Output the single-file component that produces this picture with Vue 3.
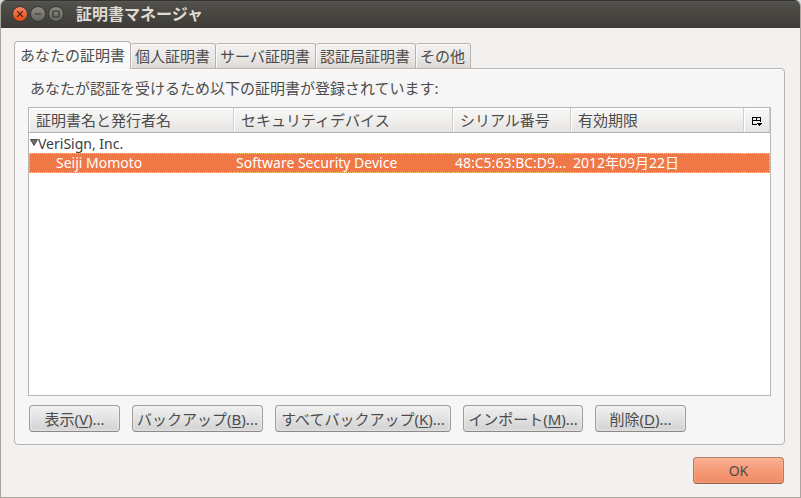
<script setup>
import { ref } from 'vue'

const tabs = ['あなたの証明書', '個人証明書', 'サーバ証明書', '認証局証明書', 'その他']
const activeTab = ref(0)

const columns = [
  { key: 'name', label: '証明書名と発行者名' },
  { key: 'device', label: 'セキュリティデバイス' },
  { key: 'serial', label: 'シリアル番号' },
  { key: 'expires', label: '有効期限' },
]

const groups = [
  {
    issuer: 'VeriSign, Inc.',
    certificates: [
      {
        name: 'Seiji Momoto',
        device: 'Software Security Device',
        serial: '48:C5:63:BC:D9...',
        expires: '2012年09月22日',
      },
    ],
  },
]
const selected = ref('Seiji Momoto')

const actions = [
  { label: '表示', accessKey: 'V' },
  { label: 'バックアップ', accessKey: 'B', size: 'm' },
  { label: 'すべてバックアップ', accessKey: 'K', size: 'l' },
  { label: 'インポート', accessKey: 'M', size: 's' },
  { label: '削除', accessKey: 'D' },
]
</script>

<template>
  <div class="window">
    <header class="titlebar">
      <button class="control close" type="button" aria-label="閉じる">
        <svg viewBox="0 0 16 16"><path d="M5.2 5.2l5.6 5.6M10.8 5.2l-5.6 5.6" /></svg>
      </button>
      <button class="control" type="button" aria-label="最小化">
        <svg viewBox="0 0 16 16"><path d="M4.500 8h7" /></svg>
      </button>
      <button class="control" type="button" aria-label="最大化">
        <svg viewBox="0 0 16 16"><path d="M5 5h6v6h-6z" /></svg>
      </button>
      <h1>証明書マネージャ</h1>
    </header>

    <main class="body">
      <div class="tabs" role="tablist">
        <button
          v-for="(tab, i) in tabs"
          :key="tab"
          type="button"
          role="tab"
          class="tab"
          :class="{ active: i === activeTab }"
          :aria-selected="i === activeTab"
          @click="activeTab = i"
        >{{ tab }}</button>
      </div>

      <section class="panel" role="tabpanel">
        <p class="intro">あなたが認証を受けるため以下の証明書が登録されています:</p>

        <div class="tree">
          <table>
            <colgroup>
              <col v-for="c in columns" :key="c.key" :class="'col-' + c.key">
              <col class="col-picker">
            </colgroup>
            <thead>
              <tr>
                <th v-for="c in columns" :key="c.key" scope="col">{{ c.label }}</th>
                <th class="picker-cell">
                  <button class="picker" type="button" aria-label="列の選択">
                    <svg viewBox="0 0 10 9" shape-rendering="crispEdges">
                      <path d="M0 0h9v1h-9zM0 1h1v7h-1zM4 1h1v3h-1zM8 1h1v4h-1zM1 3h7v1h-7zM1 7h4v1h-4z" />
                      <path d="M5 6h5v1h-1v1h-1v1h-1v-1h-1v-1h-1z" />
                    </svg>
                  </button>
                </th>
              </tr>
            </thead>
            <tbody v-for="g in groups" :key="g.issuer">
              <tr class="group">
                <td class="issuer" colspan="5">
                  <svg class="twisty" viewBox="0 0 8 7"><path d="M.5 .5h7l-3.500 6z" /></svg>{{ g.issuer }}
                </td>
              </tr>
              <tr
                v-for="c in g.certificates"
                :key="c.name"
                :class="{ selected: c.name === selected }"
                @click="selected = c.name"
              >
                <td class="child">{{ c.name }}</td>
                <td>{{ c.device }}</td>
                <td>{{ c.serial }}</td>
                <td>{{ c.expires }}</td>
                <td></td>
              </tr>
            </tbody>
          </table>
        </div>

        <div class="actions">
          <button v-for="a in actions" :key="a.label" class="button" :class="a.size" type="button">
            {{ a.label }}(<u>{{ a.accessKey }}</u>)...
          </button>
        </div>
      </section>

      <footer class="footer">
        <button class="button primary" type="button">OK</button>
      </footer>
    </main>
  </div>
</template>

<style>
body {
  background: #d9dde2;
}
</style>

<style scoped>
* {
  box-sizing: border-box;
}

.window {
  display: flex;
  flex-direction: column;
  min-height: 100vh;
  border: 1px solid #aaa49e;
  border-top: 0;
  border-radius: 6px 6px 0 0;
  background: #f2f1f0;
  color: #4c4c4c;
  font: 15px/20px "Noto Sans", "Noto Sans CJK JP", sans-serif;
  overflow: hidden;
}

button {
  margin: 0;
  padding: 0;
  font: inherit;
  color: inherit;
}

.titlebar {
  display: flex;
  align-items: center;
  gap: 2px;
  height: 28px;
  margin: 0 -1px;
  padding: 0 12px 2px;
  border-top: 1px solid #33322e;
  background: linear-gradient(#5b5a53, #504f49 2px, #3c3b37);
}

.titlebar h1 {
  margin: 0 0 0 10px;
  color: #dfdbd2;
  font-size: 16px;
  line-height: 20px;
  font-weight: 700;
}

.control {
  width: 16px;
  height: 16px;
  border: 1px solid #383733;
  border-radius: 50%;
  background: linear-gradient(#8d8c85, #64635d);
}

.control svg {
  display: block;
  width: 16px;
  height: 16px;
  margin: -1px;
  fill: none;
  stroke: #35342f;
  stroke-width: 1.2;
}

.control.close {
  background: linear-gradient(#f58560, #df4a16);
}

.control.close svg {
  stroke: #4a1d0d;
}

.body {
  display: flex;
  flex: 1;
  flex-direction: column;
  padding: 13px 15px 13px 13px;
}

.tabs {
  display: flex;
  align-items: flex-end;
  position: relative;
  margin-bottom: -1px;
}

.tab {
  height: 26px;
  padding: 0 5px 0 4px;
  border: 1px solid #b8b3ae;
  border-left: 0;
  border-radius: 3px 3px 0 0;
  background: linear-gradient(#f3f2f1, #ebe9e7 50%, #dcd9d6);
  box-shadow: inset 1px 1px 0 #f9f9f8;
  white-space: nowrap;
}

.tab.active {
  height: 28px;
  padding: 0 5px 2px;
  border-left: 1px solid #b8b3ae;
  border-bottom: 0;
  border-radius: 4px 4px 0 0;
  background: linear-gradient(#fdfdfd, #f6f6f6);
}

.panel {
  display: flex;
  flex: 1;
  flex-direction: column;
  padding: 9px 13px 12px;
  border: 1px solid #b8b3ae;
  border-radius: 0 4px 4px 4px;
  background: #f6f6f6;
  box-shadow: inset 0 1px 0 #fff;
}

.intro {
  margin: 0 0 9px 2px;
}

.tree {
  flex: 1;
  border: 1px solid #bab5b0;
  background: #fff;
}

table {
  width: 100%;
  table-layout: fixed;
  border-collapse: separate;
  border-spacing: 0;
}

.col-name {
  width: 205px;
}

.col-device {
  width: 219px;
}

.col-serial {
  width: 118px;
}

.col-picker {
  width: 26px;
}

th {
  height: 25px;
  padding: 0 7px;
  border-right: 1px solid #d0cdca;
  border-bottom: 1px solid #b3aea9;
  background: linear-gradient(#f9f9f8, #f0efee 50%, #e6e4e2);
  box-shadow: inset 1px 1px 0 #fff;
  font-weight: 400;
  text-align: left;
  white-space: nowrap;
}

th.picker-cell {
  padding: 0;
}

.picker {
  display: grid;
  place-items: center;
  width: 100%;
  height: 24px;
  padding-top: 3px;
  border: 0;
  background: none;
}

.picker svg {
  width: 10px;
  height: 9px;
  fill: #000;
}

td {
  height: 20px;
  padding: 0 2px;
  color: #3c3c3c;
  font-size: 14px;
  line-height: 18px;
  white-space: nowrap;
}

.group td {
  height: 20px;
  padding-top: 2px;
}

.twisty {
  width: 8px;
  height: 7px;
  margin-bottom: 3px;
  fill: #6f6f6f;
  stroke: #4c4c4c;
}

td.issuer {
  padding-left: 1px;
}

td.child {
  padding-left: 27px;
}

.selected td {
  border: 0 dotted #f8d66e;
  border-width: 1px 0;
  background: #f07746;
  color: #fff;
}

.selected td:first-child {
  border-left-width: 1px;
  padding-left: 26px;
}

.selected td:last-child {
  border-right-width: 1px;
}

.actions {
  display: flex;
  gap: 12px;
  margin: 9px 0 0 1px;
}

.button {
  min-width: 91px;
  height: 27px;
  padding: 0 4px;
  border: 1px solid #a09d9a;
  border-bottom-color: #8c8986;
  border-radius: 4px;
  background: linear-gradient(#f1f1f1, #e2e2e2 50%, #d2d2d2);
  box-shadow: inset 0 0 3px #f6f6f6;
  white-space: nowrap;
}

.button.s {
  min-width: 120px;
}

.button.m {
  min-width: 131px;
}

.button.l {
  min-width: 176px;
}

.button u {
  text-underline-offset: 2px;
}

.footer {
  display: flex;
  justify-content: flex-end;
  padding: 12px 1px 0 0;
}

.button.primary {
  border-color: #b07a66;
  border-bottom-color: #94604d;
  background: linear-gradient(#fbb194, #f59a77 50%, #ef8c66);
  box-shadow: inset 0 0 2px #ffc4ad;
  font-size: 14px;
}
</style>
